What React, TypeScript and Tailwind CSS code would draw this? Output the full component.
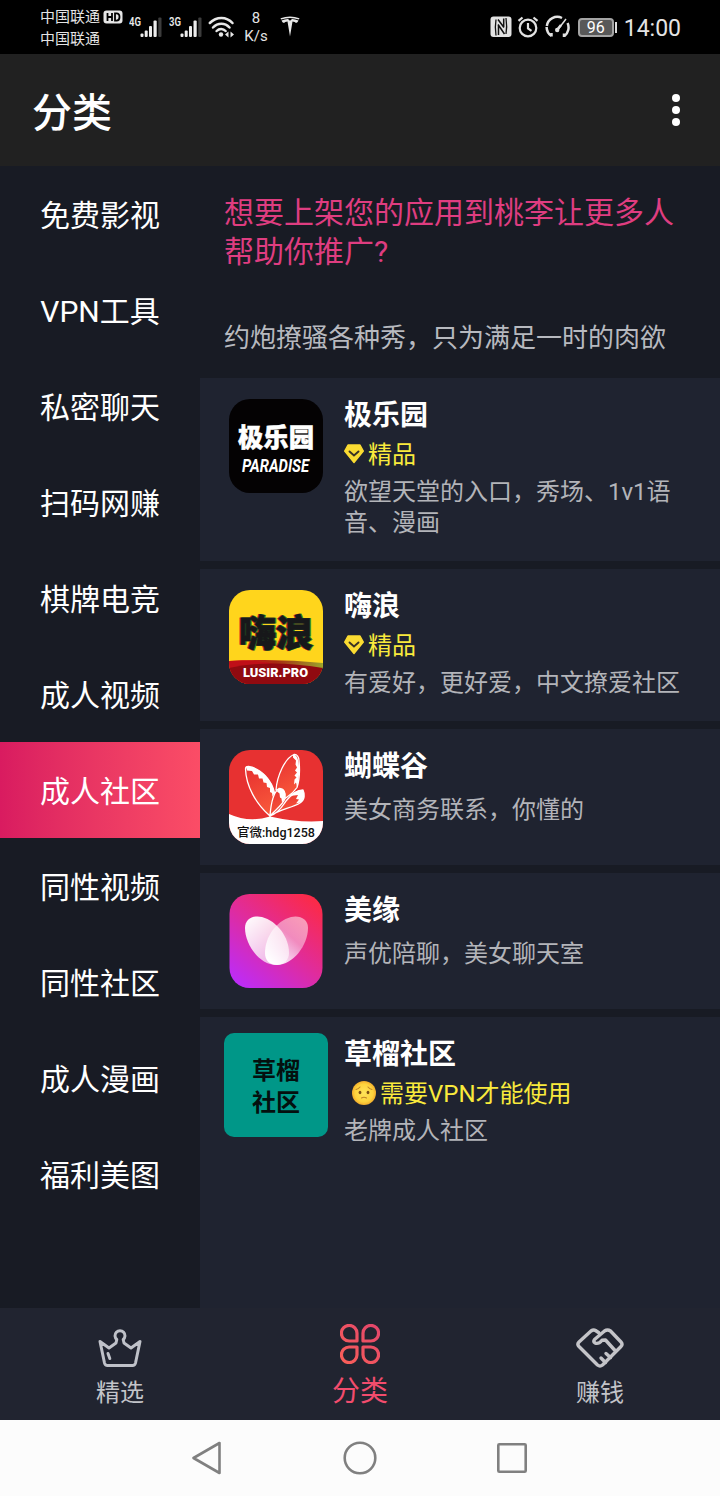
import type { ReactNode } from "react";

const categories = [
  "免费影视",
  "VPN工具",
  "私密聊天",
  "扫码网赚",
  "棋牌电竞",
  "成人视频",
  "成人社区",
  "同性视频",
  "同性社区",
  "成人漫画",
  "福利美图",
];
const activeCategory = 6;

function Signal({ label }: { label: string }) {
  return (
    <svg width="34" height="26" viewBox="0 0 34 26">
      <text x="0" y="12.500" fontSize="12" fontWeight="600" fill="#e8e8e8" fontFamily="Roboto, sans-serif" textLength="12" lengthAdjust="spacingAndGlyphs">
        {label}
      </text>
      <g fill="#ececec">
        <rect x="11.500" y="20.500" width="3" height="3.500" rx="1" />
        <rect x="15.700" y="17.500" width="3" height="6.500" rx="1" />
        <rect x="20" y="13" width="3" height="11" rx="1" />
        <rect x="24.500" y="7.500" width="3.200" height="16.500" rx="1" />
      </g>
      <rect x="29.300" y="4.500" width="3.200" height="19.500" rx="1" fill="#3c3c3c" />
    </svg>
  );
}

function StatusBar() {
  return (
    <div className="flex h-[54px] w-full bg-black text-[#e4e4e4]">
      <div className="flex w-[89px] flex-col pl-10 pt-[6px] text-[15px] leading-[22px] whitespace-nowrap">
        <div className="flex items-center">
          <span>中国联通</span>
          <svg className="ml-[3px] shrink-0" width="20" height="14" viewBox="0 0 20 14">
            <rect x="0.500" y="0.500" width="19" height="13" rx="3" fill="#e6e6e6" />
            <path d="M4.500 3v8M9 3v8M4.500 7H9M12 3.400v7.200h1.500c2.300 0 3-1.400 3-3.600s-.7-3.600-3-3.600z" fill="none" stroke="#000" strokeWidth="1.800" />
          </svg>
        </div>
        <div>中国联通</div>
      </div>
      <div className="flex pl-10 pt-[13px]">
        <Signal label="4G" />
        <div className="w-[6px]" />
        <Signal label="3G" />
      </div>
      <svg className="ml-[5px] mt-4" width="27" height="23" viewBox="0 0 27 23">
        <g fill="none" stroke="#e8e8e8" strokeWidth="2.500" strokeLinecap="round">
          <path d="M1.800 7C8.500.2 18.500.2 24.500 7" />
          <path d="M5 11.500c4.800-5 12-5 16.500 0" />
          <path d="M8.600 15c2.700-2.800 6.500-2.800 9 0" />
        </g>
        <circle cx="13" cy="18.500" r="2.200" fill="#e8e8e8" />
        <path d="M20.500 15.500v6l-3.500-3zM22.500 15.500v6l3.500-3z" fill="#e8e8e8" />
      </svg>
      <div className="ml-[7px] w-7 pt-[9px] text-center text-[15px] leading-[18px]">
        <div>8</div>
        <div>K/s</div>
      </div>
      <svg className="ml-[10px] mt-4" width="20" height="21" viewBox="0 0 20 21">
        <path d="M.5 2.200Q10-1.300 19.500 2.200l-.6 1.200Q10 .4 1.100 3.400z" fill="#e8e8e8" />
        <path d="M1.500 4.500Q5 2.800 8 2.900l2 1.800 2-1.800q3-.1 6.500 1.600-.8 2.300-2.500 2.400-.8-1.300-3.500-1.400L10 20.500 7.500 5.500Q4.800 5.600 4 6.900 2.200 6.800 1.500 4.500z" fill="#e8e8e8" />
      </svg>
      <div className="ml-auto flex h-[54px] items-center pr-[39px]">
        <svg width="22" height="22" viewBox="0 0 22 22">
          <rect x="0.500" y="0.500" width="21" height="20.500" rx="3" fill="#e2e2e2" />
          <path d="M6 3.500q-1.300 7 0 16M16 18q1.300-7 0-16" stroke="#111" strokeWidth="1.300" fill="none" />
          <path d="M8 3.500l6 8M8 8.500l6.500 9.500M8.500 9v10M13.700 2.500V11" stroke="#111" strokeWidth="1.500" fill="none" />
        </svg>
        <svg className="ml-[5px]" width="22" height="22" viewBox="0 0 22 22" fill="none" stroke="#e2e2e2" strokeWidth="2.200">
          <circle cx="11" cy="12" r="8.300" />
          <path d="M11 7v5.500l3.500 2.300M1.500 4.800l4-3.300M20.500 4.800l-4-3.300" />
        </svg>
        <svg className="ml-[6px]" width="25" height="24" viewBox="0 0 25 24" fill="none" stroke="#e2e2e2" strokeWidth="2.500">
          <path d="M6.500 21A11 11 0 0 1 1.600 12M1.800 11A10.600 10.600 0 0 1 17 3M22.600 8a11 11 0 0 1-3.100 13M6.500 21.500V18M19 22v-3.500" />
          <path d="M12.500 15L21 4" strokeWidth="1.500" />
          <circle cx="12.200" cy="15" r="2.200" fill="#e2e2e2" stroke="none" />
          <path d="M12 15l4-5" strokeWidth="2.600" />
        </svg>
        <div className="ml-[8px] flex h-[19px] w-[36px] items-center justify-center rounded-[4px] border-2 border-[#a4a4a4] bg-[#585858] pt-px text-[16px] leading-none text-white">
          96
        </div>
        <div className="ml-px h-[11px] w-[2px] bg-[#dcdcdc]" />
        <div className="ml-[7px] pt-[4px] text-[23px] leading-7">14:00</div>
      </div>
    </div>
  );
}

function ParadiseIcon() {
  return (
    <svg width="94" height="94" viewBox="0 0 94 94">
      <rect width="94" height="94" rx="21" fill="#040203" />
      <text x="9" y="48" fontSize="26" fontWeight="900" fill="#fff" stroke="#fff" strokeWidth="0.500" textLength="76" lengthAdjust="spacingAndGlyphs" fontFamily="'Noto Sans CJK SC', sans-serif">
        极乐园
      </text>
      <text x="13" y="72.500" fontSize="18" fontWeight="700" fontStyle="italic" fill="#fff" textLength="67" lengthAdjust="spacingAndGlyphs" fontFamily="Roboto, sans-serif">
        PARADISE
      </text>
    </svg>
  );
}

function WaveIcon() {
  return (
    <svg width="94" height="94" viewBox="0 0 94 94">
      <defs>
        <clipPath id="wave-clip">
          <rect width="94" height="94" rx="21" />
        </clipPath>
        <linearGradient id="wave-top" x1="0" x2="1">
          <stop offset="0" stopColor="#d8101c" />
          <stop offset="0.500" stopColor="#a82a12" />
          <stop offset="1" stopColor="#9aa42c" />
        </linearGradient>
      </defs>
      <g clipPath="url(#wave-clip)">
        <rect width="94" height="94" fill="#ffd51c" />
        <path d="M0 71Q48 68 94 73V94H0z" fill="url(#wave-top)" />
        <path d="M0 71q26-2 50 4t44 3v16H0z" fill="#c00f18" />
        <path d="M0 78q40-9 94 0v16H0z" fill="#900a10" />
        <text x="9" y="57" fontSize="37" fontWeight="900" fill="#c22a18" stroke="#c22a18" strokeWidth="0.800" textLength="74" lengthAdjust="spacingAndGlyphs" fontFamily="'Noto Sans CJK SC', sans-serif">
          嗨浪
        </text>
        <text x="11" y="57" fontSize="37" fontWeight="900" fill="#2f8a34" stroke="#2f8a34" strokeWidth="0.800" textLength="74" lengthAdjust="spacingAndGlyphs" fontFamily="'Noto Sans CJK SC', sans-serif">
          嗨浪
        </text>
        <text x="10" y="57" fontSize="37" fontWeight="900" fill="#17181a" stroke="#17181a" strokeWidth="0.800" textLength="74" lengthAdjust="spacingAndGlyphs" fontFamily="'Noto Sans CJK SC', sans-serif">
          嗨浪
        </text>
        <text x="14" y="87" fontSize="12" fontWeight="900" fill="#fff" textLength="65" lengthAdjust="spacingAndGlyphs" fontFamily="Roboto, sans-serif">
          LUSIR.PRO
        </text>
      </g>
    </svg>
  );
}

function ButterflyIcon() {
  return (
    <svg width="94" height="94" viewBox="0 0 94 94">
      <defs>
        <clipPath id="fly-clip">
          <rect width="94" height="94" rx="21" />
        </clipPath>
        <linearGradient id="fly-wing" x1="0.200" y1="0" x2="0.500" y2="1">
          <stop offset="0" stopColor="#e73131" />
          <stop offset="1" stopColor="#f8583a" />
        </linearGradient>
      </defs>
      <g clipPath="url(#fly-clip)">
        <rect width="94" height="94" fill="#e73131" />
        <path d="M0 64q20 9 41 2.500Q70 73 94 71v23H0z" fill="#fff" />
        <g fill="url(#fly-wing)" stroke="#fff" strokeWidth="1.300" strokeLinejoin="round">
          <path d="M41 66C27 54 17 36 16.500 19c0-2 1-2.500 3-2.500C32 18 43 31 45.500 43c.5 7-3 14-4.500 23z" />
          <path d="M47 40C48 26 56 8 65 4.500c3-.5 5 3 5 6 1 10 1 18-2 27-4 6-8 8-12 11-1-5-3-9-9-8.500z" />
          <path d="M41 66C42 52 45 42 50 38.500c5 0 7 4 6 10-2 6-9 11-15 17.500z" />
          <path d="M41 66c9-3 13-11 16-15 5-6 11-11 17-11 2 4 2 10-3 13-8 5-20 6-30 13z" />
        </g>
        <g fill="#fff">
          <path d="M17 16.500c13 0 26 12 28.500 26.500l-2 4-.5-4-2-1 0-4-3-1-.5-4-3-.5-1-4-3.500 0-1-4-4 0-2-3.500-5-.5z" />
          <path d="M64 4.500c7-1 7.500 20 4 32l-1-4-2 2 .5-5 2-2-2-2 2.500-3-2-2 2-3-1.500-3 .5-4-3-3z" />
          <path d="M49 39c6-1.500 9 4 6.500 10.500l-2.500 3-.5-4-1.500-1-.5-4-2.500-2z" />
          <path d="M60 46c6-5 10-6.500 14-6 2 5 2 9-3 12.500l-4 1 3-4-3-.5 2-4-4 .5z" />
        </g>
        <text x="8" y="87" fontSize="12" fontWeight="500" fill="#111" fontFamily="Roboto, 'Noto Sans CJK SC', sans-serif" textLength="78" lengthAdjust="spacingAndGlyphs">
          官微:hdg1258
        </text>
      </g>
    </svg>
  );
}

function HeartIcon() {
  return (
    <svg width="94" height="94" viewBox="0 0 94 94">
      <defs>
        <linearGradient id="heart-bg" x1="0.100" y1="1" x2="0.900" y2="0">
          <stop offset="0" stopColor="#bb2cfb" />
          <stop offset="0.500" stopColor="#e02c9c" />
          <stop offset="1" stopColor="#fd2a42" />
        </linearGradient>
        <linearGradient id="petal-left" x1="0" y1="0" x2="0.800" y2="1">
          <stop offset="0" stopColor="#fff" />
          <stop offset="1" stopColor="#fff" stopOpacity="0.600" />
        </linearGradient>
        <linearGradient id="petal-right" x1="1" y1="0" x2="0.200" y2="1">
          <stop offset="0" stopColor="#fff" stopOpacity="0.550" />
          <stop offset="0.450" stopColor="#fff" stopOpacity="0.450" />
          <stop offset="1" stopColor="#fff" />
        </linearGradient>
      </defs>
      <rect x="0.500" width="93" height="94" rx="20" fill="url(#heart-bg)" />
      <path d="M47 71C31 71 16 51 16 34c0-9 8-13 17-11 15 4 27 20 27 36 0 7-5 12-13 12z" fill="url(#petal-left)" />
      <path d="M48 71c16 0 31-20 31-37 0-9-8-13-17-11-15 4-26 20-26 36 0 7 4 12 12 12z" fill="url(#petal-right)" />
    </svg>
  );
}

function Gem() {
  return (
    <svg width="20" height="20" viewBox="0 0 20 20">
      <path d="M4 1h12l3.300 6L10 18.500.7 7z" fill="#fbdc32" stroke="#fbdc32" strokeWidth="1.400" strokeLinejoin="round" />
      <path d="M5.500 7.500l4.500 4 4.500-4" fill="none" stroke="#3a3326" strokeWidth="1.900" strokeLinecap="round" />
    </svg>
  );
}

function WorriedFace() {
  return (
    <svg width="24" height="24" viewBox="0 0 24 24">
      <defs>
        <radialGradient id="face">
          <stop offset="0" stopColor="#ffe45a" />
          <stop offset="0.750" stopColor="#fdd23c" />
          <stop offset="1" stopColor="#f2ac2c" />
        </radialGradient>
      </defs>
      <circle cx="12" cy="12" r="12" fill="url(#face)" />
      <ellipse cx="8" cy="11.500" rx="1.400" ry="1.800" fill="#7b4d14" />
      <ellipse cx="16" cy="11.500" rx="1.400" ry="1.800" fill="#7b4d14" />
      <path d="M4 8.500q2.500-.5 4-2.500M20 8.500q-2.500-.5-4-2.500M9.500 17q2.500-1.500 5 0" fill="none" stroke="#c08428" strokeWidth="1.100" strokeLinecap="round" />
    </svg>
  );
}

type AppEntry = { name: string; icon: ReactNode; tag?: ReactNode; desc: string };

const apps: AppEntry[] = [
  {
    name: "极乐园",
    icon: <ParadiseIcon />,
    tag: (
      <>
        <Gem />
        <span className="ml-1 pt-px">精品</span>
      </>
    ),
    desc: "欲望天堂的入口，秀场、1v1语音、漫画",
  },
  {
    name: "嗨浪",
    icon: <WaveIcon />,
    tag: (
      <>
        <Gem />
        <span className="ml-1 pt-px">精品</span>
      </>
    ),
    desc: "有爱好，更好爱，中文撩爱社区",
  },
  { name: "蝴蝶谷", icon: <ButterflyIcon />, desc: "美女商务联系，你懂的" },
  { name: "美缘", icon: <HeartIcon />, desc: "声优陪聊，美女聊天室" },
  {
    name: "草榴社区",
    icon: (
      <div className="flex h-[104px] w-[104px] items-center justify-center rounded-[10px] bg-[#009788] pt-[3px] text-center text-[24px] leading-8 font-bold text-[#04100f]">
        草榴
        <br />
        社区
      </div>
    ),
    tag: (
      <>
        <span className="ml-2">
          <WorriedFace />
        </span>
        <span className="ml-[4px] pt-px">需要VPN才能使用</span>
      </>
    ),
    desc: "老牌成人社区",
  },
];

function AppCard({ app }: { app: AppEntry }) {
  return (
    <div className="flex bg-[#1f2330] px-6 py-4 last:grow">
      <div className="flex h-[104px] w-[104px] shrink-0 items-center justify-center">{app.icon}</div>
      <div className="ml-4 min-w-0 flex-1">
        <div className="pt-px text-[28px] leading-[41px] font-bold text-white">{app.name}</div>
        {app.tag && <div className="flex h-9 items-center text-[24px] leading-[34px] text-[#f9ea3c]">{app.tag}</div>}
        <div className={app.tag ? "pt-[5px] pb-[6px] text-[24px] leading-[31px] text-[#b3b4b9]" : "pt-2 text-[24px] leading-[31px] text-[#b3b4b9]"}>
          {app.desc}
        </div>
      </div>
    </div>
  );
}

function TabBar() {
  return (
    <div className="grid h-28 grid-cols-3 bg-[#212430] text-[24px] text-[#c3c4c9]">
      <div className="flex flex-col items-center pt-5">
        <svg width="44" height="40" viewBox="0 0 44 40" fill="none" stroke="#bfc1c8" strokeWidth="3" strokeLinejoin="round" strokeLinecap="round">
          <path d="M18.800 11.500a5 5 0 1 1 6.400 0L26 15l7 5 9-6.500-4.500 21.500q-.6 2.500-3 2.500h-25Q7.100 37.500 6.500 35L2 13.500 11 20l7-5z" />
          <path d="M10 25.500l1.800 5" />
        </svg>
        <span className="pt-px leading-[48px]">精选</span>
      </div>
      <div className="flex flex-col items-center pt-4">
        <svg width="40" height="40" viewBox="0 0 40 40" fill="none" strokeWidth="3.200" strokeLinejoin="round">
          <defs>
            <linearGradient id="clover" gradientUnits="userSpaceOnUse" x1="40" y1="0" x2="0" y2="40">
              <stop offset="0" stopColor="#e2456c" />
              <stop offset="1" stopColor="#fb6058" />
            </linearGradient>
          </defs>
          <g stroke="url(#clover)">
            <path d="M17 17V9.500A7.800 7.800 0 1 0 9.500 17z" />
            <path d="M23 17V9.500A7.800 7.800 0 1 1 30.500 17z" />
            <path d="M17 23v7.500A7.800 7.800 0 1 1 9.500 23z" />
            <path d="M23 23v7.500A7.800 7.800 0 1 0 30.500 23z" />
          </g>
        </svg>
        <span className="pt-[2px] text-[28px] leading-[52px] text-[#f24c6d]">分类</span>
      </div>
      <div className="flex flex-col items-center pt-5">
        <svg width="48" height="40" viewBox="0 0 48 40" fill="none" stroke="#c4c4c8" strokeWidth="3.400" strokeLinejoin="round" strokeLinecap="round">
          <path d="M22.500 4.500L19.500 2.500q-2-1.200-4.500.5L3 14q-2.200 2.200 0 4.500L21.500 37q2.500 2 5 0L45 18.500q2-2.300 0-4.500L34.500 3q-3-2-6 0L18.500 11.500q-1.500 2 .5 3.500 3.500 1.500 7-2.800l3.500-.2L39 22.500" />
          <path d="M30 25.500l4.500 4M25 30l4.500 4.500" />
        </svg>
        <span className="pt-px leading-[48px]">赚钱</span>
      </div>
    </div>
  );
}

export default function App() {
  return (
    <div className="flex h-[1496px] w-[720px] flex-col overflow-hidden bg-[#181b24] font-[Roboto,'Noto_Sans_CJK_SC',sans-serif]">
      <StatusBar />
      <header className="flex h-28 items-center justify-between bg-[#212121] pr-10 pl-8">
        <h1 className="pt-2 text-[40px] leading-[56px] font-medium text-white">分类</h1>
        <div className="flex flex-col gap-1">
          <div className="h-2 w-2 rounded-full bg-white" />
          <div className="h-2 w-2 rounded-full bg-white" />
          <div className="h-2 w-2 rounded-full bg-white" />
        </div>
      </header>
      <div className="flex h-[1142px]">
        <nav className="w-[200px] bg-[#181b24]">
          {categories.map((name, i) => (
            <div
              key={name}
              className={
                i === activeCategory
                  ? "flex h-24 items-center justify-center bg-linear-to-r from-[#d91b60] to-[#fb4d66] pt-[3px] text-[30px] text-white"
                  : "flex h-24 items-center justify-center pt-[3px] text-[30px] text-white"
              }
            >
              {name}
            </div>
          ))}
        </nav>
        <main className="flex flex-1 flex-col bg-[#181b24]">
          <div className="h-[130px] px-6 pt-[27px] text-[30px] leading-[39px] text-[#df3d80]">
            想要上架您的应用到桃李让更多人帮助你推广?
          </div>
          <div className="h-[82px] px-6 pt-[21px] text-[26px] leading-[42px] whitespace-nowrap text-[#b7b9bf]">
            约炮撩骚各种秀，只为满足一时的肉欲
          </div>
          <div className="flex grow flex-col gap-2">
            {apps.map((app) => (
              <AppCard key={app.name} app={app} />
            ))}
          </div>
        </main>
      </div>
      <TabBar />
      <div className="flex h-[76px] items-center justify-center bg-[#fcfcfc]">
        <svg width="336" height="36" viewBox="0 0 336 36" fill="none" stroke="#808080" strokeWidth="2.600" strokeLinejoin="round">
          <path d="M1.500 18L27.500 3v30z" />
          <circle cx="168" cy="18" r="15.300" />
          <rect x="306.300" y="4.300" width="27.400" height="27.400" rx="1" />
        </svg>
      </div>
    </div>
  );
}
